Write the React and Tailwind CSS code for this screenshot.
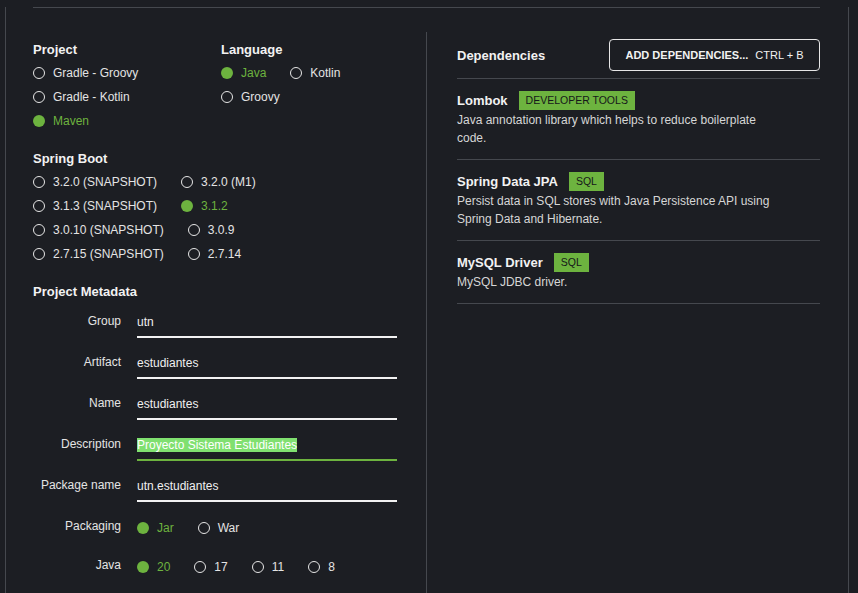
const font = { fontFamily: '"Liberation Sans", Arial, sans-serif' };

function Radio({ label, checked }) {
  return (
    <div className="flex items-center gap-2">
      {checked ? (
        <span className="h-3 w-3 rounded-full bg-[#6db33f]" />
      ) : (
        <span className="h-3 w-3 rounded-full border-[1.5px] border-[#e6e6e6]" />
      )}
      <span className={checked ? "text-[#6db33f]" : "text-[#e4e4e4]"}>{label}</span>
    </div>
  );
}

function RadioRow({ items }) {
  return (
    <div className="flex h-6 items-center gap-6">
      {items.map(([label, checked]) => (
        <Radio key={label} label={label} checked={checked} />
      ))}
    </div>
  );
}

function Heading({ children, className = "mb-[3px]" }) {
  return (
    <h3 className={`text-[13px] font-bold leading-4 text-[#f2f2f2] ${className}`}>
      {children}
    </h3>
  );
}

function Field({ label, value, selected }) {
  return (
    <div className="flex h-[41px]">
      <div className="w-[88px] pt-3 text-right leading-4 text-[#e4e4e4]">{label}</div>
      <div
        className={`ml-4 h-[37px] w-[260px] border-b-2 pt-[13px] pb-[6px] leading-4 ${
          selected ? "border-[#6db33f]" : "border-[#f2f2f2]"
        }`}
      >
        {selected ? (
          <span className="bg-[#80e070] text-white">{value}</span>
        ) : (
          <span className="text-[#f0f0f0]">{value}</span>
        )}
      </div>
    </div>
  );
}

function RadioField({ label, items, h }) {
  return (
    <div className={`flex ${h}`}>
      <div className="w-[88px] pt-3 text-right leading-4 text-[#e4e4e4]">{label}</div>
      <div className="ml-4 mt-[14px] flex h-4 items-center gap-6">
        {items.map(([l, c]) => (
          <Radio key={l} label={l} checked={c} />
        ))}
      </div>
    </div>
  );
}

function Dependency({ name, tag, desc }) {
  return (
    <div className="border-b border-[#45484e] pt-3 pb-3">
      <div className="flex h-[19px] items-center gap-[11px]">
        <span className="text-[13px] font-bold text-[#f2f2f2]">{name}</span>
        <span className="flex h-[19px] items-center bg-[#6db33f] px-[7px] text-[10.5px] text-[#15171a]">
          {tag}
        </span>
      </div>
      <p className="mt-px max-w-[320px] leading-[18px] text-[#d6d6d6]">{desc}</p>
    </div>
  );
}

export default function App() {
  return (
    <div className="h-[593px] w-full overflow-hidden bg-[#1c1e23] text-[12px]" style={font}>
      <div className="ml-[5px] h-[700px] w-[844px] border-x border-[#45484e] pl-[27px] pr-[28px]">
        <div className="mt-[7px] border-t border-[#45484e]" />
        <div className="mt-6 flex h-[700px]">
          <div className="w-[394px] border-r border-[#45484e] pt-[10px]">
            <div className="flex">
              <div className="w-[188px]">
                <Heading>Project</Heading>
                <RadioRow items={[["Gradle - Groovy", false]]} />
                <RadioRow items={[["Gradle - Kotlin", false]]} />
                <RadioRow items={[["Maven", true]]} />
              </div>
              <div>
                <Heading>Language</Heading>
                <RadioRow items={[["Java", true], ["Kotlin", false]]} />
                <RadioRow items={[["Groovy", false]]} />
              </div>
            </div>

            <Heading className="mt-[18px] mb-[3px]">Spring Boot</Heading>
            <RadioRow items={[["3.2.0 (SNAPSHOT)", false], ["3.2.0 (M1)", false]]} />
            <RadioRow items={[["3.1.3 (SNAPSHOT)", false], ["3.1.2", true]]} />
            <RadioRow items={[["3.0.10 (SNAPSHOT)", false], ["3.0.9", false]]} />
            <RadioRow items={[["2.7.15 (SNAPSHOT)", false], ["2.7.14", false]]} />

            <Heading className="mt-[18px] mb-px">Project Metadata</Heading>
            <Field label="Group" value="utn" />
            <Field label="Artifact" value="estudiantes" />
            <Field label="Name" value="estudiantes" />
            <Field label="Description" value="Proyecto Sistema Estudiantes" selected />
            <Field label="Package name" value="utn.estudiantes" />
            <RadioField label="Packaging" h="h-[39px]" items={[["Jar", true], ["War", false]]} />
            <RadioField
              label="Java"
              h="h-[41px]"
              items={[["20", true], ["17", false], ["11", false], ["8", false]]}
            />
          </div>

          <div className="flex-1 pl-[30px]">
            <div className="flex items-center justify-between border-b border-[#45484e] py-[7px]">
              <h3 className="mt-[2px] text-[13px] font-bold text-[#f2f2f2]">Dependencies</h3>
              <button className="flex h-8 w-[211px] items-center justify-center rounded-[4px] border border-[#e6e6e6] text-[11px] text-[#f2f2f2]">
                <span className="font-bold">ADD DEPENDENCIES...</span>
                <span className="ml-[7px]">CTRL + B</span>
              </button>
            </div>
            <Dependency
              name="Lombok"
              tag="DEVELOPER TOOLS"
              desc="Java annotation library which helps to reduce boilerplate code."
            />
            <Dependency
              name="Spring Data JPA"
              tag="SQL"
              desc="Persist data in SQL stores with Java Persistence API using Spring Data and Hibernate."
            />
            <Dependency name="MySQL Driver" tag="SQL" desc="MySQL JDBC driver." />
          </div>
        </div>
      </div>
    </div>
  );
}
